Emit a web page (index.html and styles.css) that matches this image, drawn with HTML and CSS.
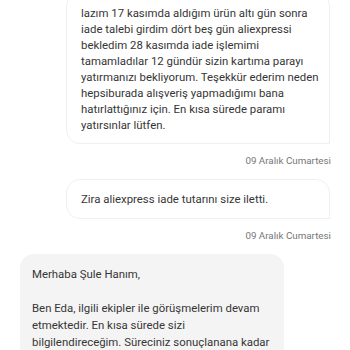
FILE: index.html
```html
<!DOCTYPE html>
<html lang="tr">
<head>
    <meta charset="UTF-8">
    <meta name="viewport" content="width=device-width, initial-scale=1.0">
    <link rel="stylesheet" href="styles.css">
</head>
<body>

<div class="chat">
    <div class="message sent first">
        <div class="bubble">
            lazım 17 kasımda aldığım ürün altı gün sonra iade talebi girdim dört beş gün aliexpressi bekledim 28 kasımda iade işlemimi tamamladılar 12 gündür sizin kartıma parayı yatırmanızı bekliyorum. Teşekkür ederim neden hepsiburada alışveriş yapmadığımı bana hatırlattığınız için. En kısa sürede paramı yatırsınlar lütfen.
        </div>
        <div class="date">09 Aralık Cumartesi</div>
    </div>

    <div class="message sent">
        <div class="bubble">Zira aliexpress iade tutarını size iletti.</div>
        <div class="date">09 Aralık Cumartesi</div>
    </div>

    <div class="message received">
        <div class="bubble">
            <p>Merhaba Şule Hanım,</p>
            <p>Ben Eda, ilgili ekipler ile görüşmelerim devam etmektedir. En kısa sürede sizi bilgilendireceğim. Süreciniz sonuçlanana kadar takipte olacağım.</p>
        </div>
    </div>
</div>

</body>
</html>
```

FILE: styles.css
```css
body {
    font-family: Roboto, "Liberation Sans", Arial, sans-serif;
    background-color: #fff;
    margin: 0;
    padding: 0;
    color: #363636;
    overflow: hidden;
}

.chat {
    display: flex;
    flex-direction: column;
    padding: 0 20px;
}

.message {
    display: flex;
    flex-direction: column;
}

.message.sent {
    align-items: flex-end;
}

.message.received {
    align-items: flex-start;
    margin-top: 0;
}

.message.first {
    margin-top: -8px;
}

.bubble {
    box-sizing: border-box;
    width: 264px;
    font-size: 11.4px;
    line-height: 16px;
    border-radius: 14px;
}

.sent .bubble {
    background: #fff;
    border: 1px solid #efefef;
    border-bottom-right-radius: 0;
    padding: 11px 10px 11px 14px;
}

.first .bubble {
    padding-top: 12px;
    padding-bottom: 10px;
}

.received .bubble {
    background: #f4f4f4;
    padding: 12px 12px;
    line-height: 17px;
}

.received .bubble p {
    margin: 0 0 17px 0;
}

.date {
    font-size: 9.8px;
    color: #777;
    margin-top: 11px;
    margin-bottom: 13px;
    margin-right: -1px;
}
```
